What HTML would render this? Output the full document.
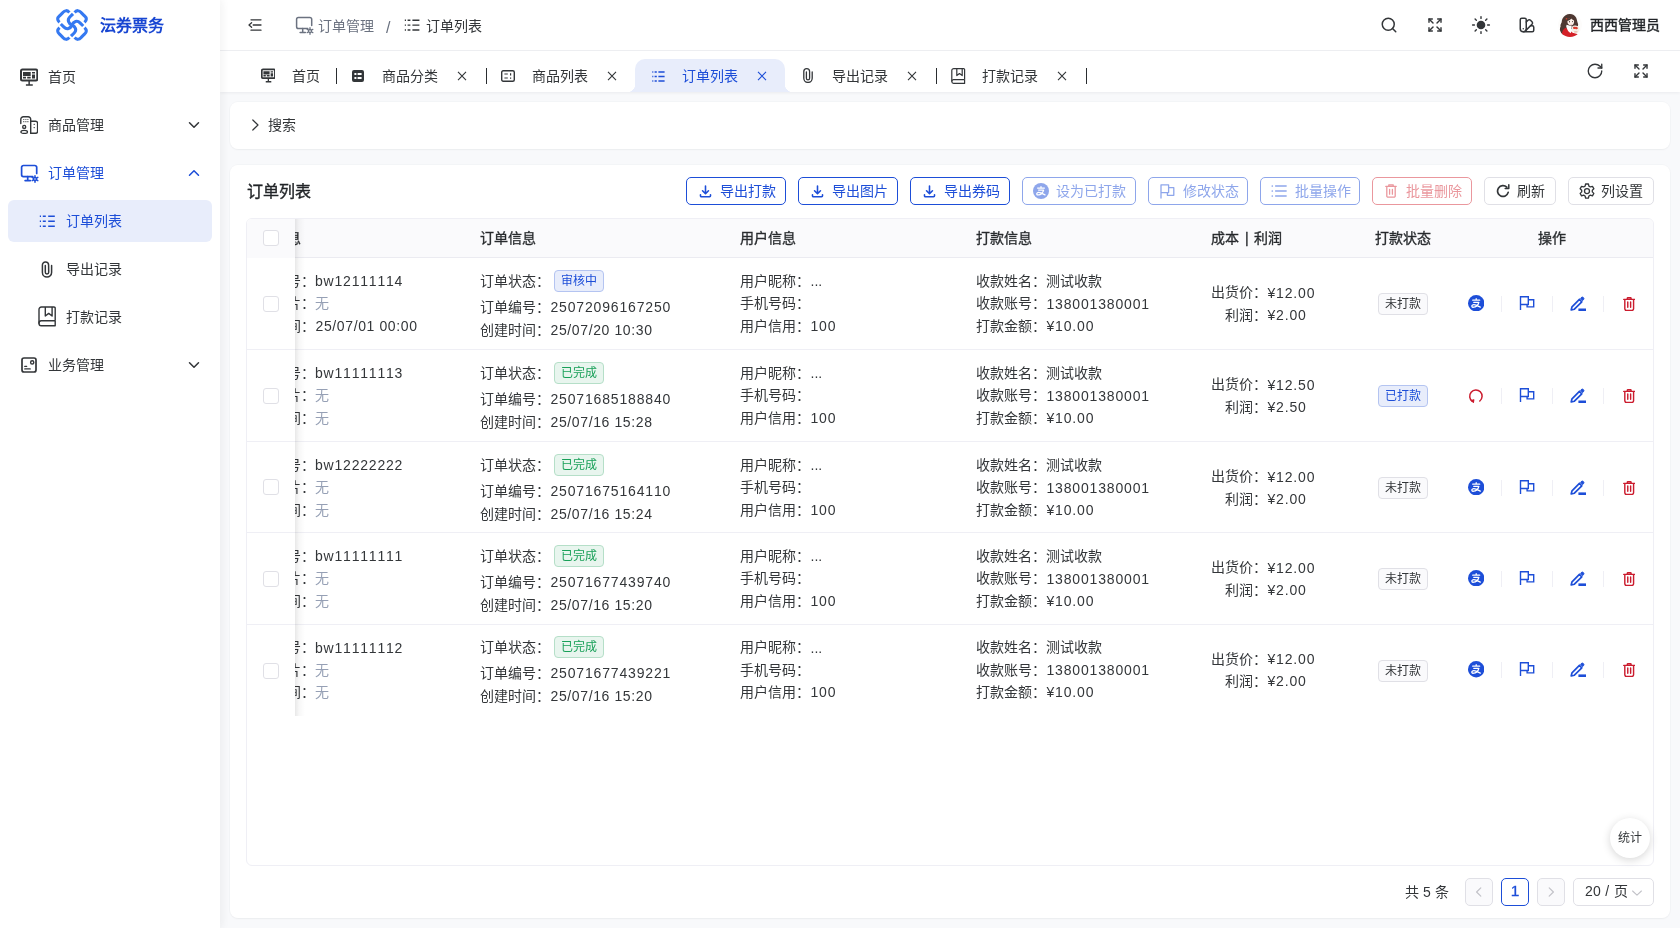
<!DOCTYPE html>
<html lang="zh-CN">
<head>
<meta charset="utf-8">
<title>订单列表</title>
<style>
*{box-sizing:border-box;margin:0;padding:0}
html,body{width:1680px;height:928px;overflow:hidden}
body{font-family:"Liberation Sans",sans-serif;font-size:14px;color:#333639;background:#f8f9fb;position:relative;line-height:22px}
.n{letter-spacing:.83px;position:relative;top:.4px;font-kerning:none}
.c .n{margin-left:.5px}
.c .n.w{margin-left:0}
.n.w{letter-spacing:.8px}
.n.d{letter-spacing:.62px}
svg{display:block}
#side,#head,#tabs,.panel{will-change:transform}
/* ---------- sidebar ---------- */
#side{position:absolute;left:0;top:0;width:220px;height:928px;background:#fff;box-shadow:2px 0 8px rgba(29,35,41,.06);z-index:5}
#logo{position:absolute;left:0;top:0;width:220px;height:50px}
#logo svg{position:absolute;left:56px;top:9px}
#logo b{position:absolute;left:100px;top:15px;font-size:16px;line-height:22px;color:#1846d2;font-weight:700;white-space:nowrap}
.mi{position:absolute;left:8px;width:204px;height:42px;border-radius:6px;color:#333639}
.mi svg.ic{position:absolute;left:12px;top:12px}
.mi span{position:absolute;left:40px;top:10px;line-height:22px;white-space:nowrap}
.mi svg.ar{position:absolute;left:180px;top:15px}
.mi.sub svg.ic{left:30px}
.mi.sub span{left:58px}
.mi.on{color:#1d4ed8}
.mi.sel{background:#e8edfb;color:#1d4ed8}
/* ---------- header ---------- */
#head{position:absolute;left:220px;top:0;width:1460px;height:51px;background:#fff;border-bottom:1px solid #eff0f3}
#head .a{position:absolute}
#head .t{position:absolute;top:14.7px;line-height:22px;white-space:nowrap}
/* ---------- tabs ---------- */
#tabs{position:absolute;left:220px;top:51px;width:1460px;height:41px;background:#fff;box-shadow:0 1px 3px rgba(0,21,41,.06)}
.tb{position:absolute;top:9px;height:32px;width:150px}
.tb svg.ic{position:absolute;left:16px;top:8px}
.tb span{position:absolute;left:46px;top:5px;line-height:22px;white-space:nowrap}
.tb svg.x{position:absolute;left:121px;top:11px}
.tb i{position:absolute;left:0;top:8px;width:1px;height:16px;background:#2a2d30}
.tb.act{color:#1d4ed8}
#actbg{position:absolute;left:415px;top:8.3px;width:150px;height:32.7px;background:#e8edfb;border-radius:10px 10px 0 0}
#actbg:before,#actbg:after{content:"";position:absolute;bottom:0;width:8px;height:8px}
#actbg:before{left:-8px;background:radial-gradient(circle at 0 0,transparent 8px,#e8edfb 8.5px)}
#actbg:after{right:-8px;background:radial-gradient(circle at 100% 0,transparent 8px,#e8edfb 8.5px)}
/* ---------- panels ---------- */
.panel{position:absolute;left:230px;width:1440px;background:#fff;border-radius:8px;box-shadow:0 0 0 1px rgba(20,30,60,.018),0 1px 2px rgba(20,30,60,.04)}
/* ---------- buttons ---------- */
.btn{position:absolute;top:12px;height:28px;border:1px solid #e0e0e6;border-radius:5px;font-size:14px;line-height:26px;white-space:nowrap;background:#fff;color:#333639}
.btn svg{position:absolute;left:11px;top:5px}
.btn span{position:absolute;left:33px;top:0}
.btn.p{border-color:#1d4ed8;color:#1d4ed8}
.btn.pd{border-color:#8ea6eb;color:#8ea6eb}
.btn.ed{border-color:#ea979d;color:#ea979d}
/* ---------- table ---------- */
#tbl{position:absolute;left:16px;top:53px;width:1408px;height:648px;border:1px solid #efeff5;border-radius:6px;overflow:hidden}
#th{position:absolute;left:0;top:0;width:100%;height:39px;background:#fafafc;border-bottom:1px solid #ebebf1;font-weight:400;-webkit-text-stroke:.35px #333639;color:#1f2225}
#th span{position:absolute;top:8px;line-height:22px;white-space:nowrap}
.tr{position:absolute;left:0;width:100%;height:92px;border-bottom:1px solid #efeff5;background:#fff}
.c{position:absolute;white-space:nowrap;line-height:22.4px}
.c div{height:22.4px}
.cb{position:absolute;left:16px;width:16px;height:16px;border:1px solid #e0e0e6;border-radius:3px;background:#fff}
.g{color:#96a0b5}
.tag{display:inline-block;height:22px;line-height:20px;font-size:12px;padding:0 6px;border-radius:4px;border:1px solid #e0e0e6;background:#fafafc;color:#333639;vertical-align:top}
.tag.b{color:#1d4ed8;background:#e8edfb;border-color:#b4c4f1}
.tag.gr{color:#18a058;background:#e8f5ee;border-color:#b5dfc8}
.ops{position:absolute;left:1210px;top:37.5px;width:190px;height:22px}
.ops svg{position:absolute;top:2px}
.ops i{position:absolute;top:0;width:1px;height:16px;background:#efeff5}
#fix{position:absolute;left:0;top:0;width:48px;height:497px;background:#fff;z-index:2}
.last>*{margin-top:-.7px}
.ln{position:absolute;left:0;width:48px;height:1px;background:#efeff5}
#sh{position:absolute;left:48px;top:0;width:10px;height:497px;background:linear-gradient(90deg,rgba(0,0,0,.09),rgba(0,0,0,.03) 40%,rgba(0,0,0,0))}
.pg{position:absolute;top:713px;width:28px;height:28px;border:1px solid #e0e0e6;border-radius:5px;line-height:24.6px;text-align:center;background:#fff;white-space:nowrap}
.pg svg{margin:7px auto 0}
</style>
</head>
<body>
<div id="side">
<div id="logo">
<svg width="32" height="32" viewBox="0 0 32 32" fill="none" stroke="#3579f1" stroke-width="3.1" stroke-linecap="butt" stroke-linejoin="round">
<path d="M13.4 3.5Q10-.2 6.8 3.6L3.6 6.8Q-.2 10 3.5 13.4"/>
<path d="M18.6 3.5Q22-.2 25.2 3.6L28.4 6.8Q32.2 10 28.5 13.4"/>
<path d="M13.4 28.5Q10 32.2 6.8 28.4L3.6 25.2Q-.2 22 3.5 18.6"/>
<path d="M18.6 28.5Q22 32.2 25.2 28.4L28.4 25.2Q32.2 22 28.5 18.6"/>
<path id="lgS" d="M17 4.8 13.8 8C11 10.8 12.4 14.4 16 16C19.6 17.6 21 21.2 18.2 24L15 27.2"/>
<path d="M17 4.8 13.8 8C11 10.8 12.4 14.4 16 16C19.6 17.6 21 21.2 18.2 24L15 27.2" transform="rotate(-90 16 16)"/>
</svg>
<b>沄券票务</b>
</div>
<div class="mi" style="top:56px">
<svg class="ic" width="18.4" height="18" viewBox="0 0 18.4 18" fill="none" stroke="#333639" style="left:11.9px"><rect x="1" y="1.6" width="16.3" height="11" rx="1.5" stroke-width="2"/><path d="M9.15 12.6v4M5.9 17.1h6.9" stroke-width="1.5"/><path d="M3 4.1h7.7v3.850H3zM12 4.1h3v1.4h-3zM12 6.6h3v3.9h-3zM3 8.8h3v1.7H3zM7.2 8.8h3.5v1.7H7.2z" fill="#333639" stroke="none"/></svg>
<span>首页</span></div>
<div class="mi" style="top:104px">
<svg class="ic" width="18" height="18" viewBox="0 0 18 18" fill="none" stroke="#333639" stroke-width="1.4" stroke-linecap="round" stroke-linejoin="round"><path d="M.8 7.6V3.4A2.6 2.6 0 0 1 3.4.8h4.7a2.6 2.6 0 0 1 2.6 2.6V17.3"/><path d="M10.7 5.2h4.7a2.2 2.2 0 0 1 2.2 2.2v7.9a2 2 0 0 1-2 2H10.7"/><circle cx="4.2" cy="10.9" r="1.5"/><ellipse cx="4.2" cy="15.9" rx="3.3" ry="1.55" stroke-width="1.3"/><path d="M3.8 3.5h.01M5.9 3.5h.01M7.9 3.5h.01M3.8 5.7h.01M5.9 5.7h.01M7.9 5.7h.01M14.1 8.3h.2M14.1 11.6h.2" stroke-width="1.2"/></svg>
<span>商品管理</span>
<svg class="ar" width="12" height="12" viewBox="0 0 12 12" fill="none" stroke="#333639" stroke-width="1.5" stroke-linecap="round" stroke-linejoin="round"><path d="M1.5 3.7 6 8.3 10.5 3.7"/></svg></div>
<div class="mi on" style="top:152px">
<svg class="ic" width="19" height="19" viewBox="0 0 19 19" fill="none" stroke="#1d4ed8" stroke-width="1.7" stroke-linecap="round" stroke-linejoin="round"><path d="M16.7 9.5V3.3A1.8 1.8 0 0 0 14.9 1.5H3.4A1.8 1.8 0 0 0 1.6 3.3v7.450a1.8 1.8 0 0 0 1.8 1.8h9.4"/><path d="M7.7 12.6v4M5.1 16.6h5.2"/><circle cx="15" cy="15" r="1.5" stroke-width="1.5"/><path d="M15.00 13.10L15.00 11.75M15.00 16.90L15.00 18.25M16.65 15.95L17.81 16.62M16.65 14.05L17.81 13.38M13.35 15.95L12.19 16.62M13.35 14.05L12.19 13.38" stroke-width="1.5"/></svg>
<span>订单管理</span>
<svg class="ar" width="12" height="12" viewBox="0 0 12 12" fill="none" stroke="#1d4ed8" stroke-width="1.5" stroke-linecap="round" stroke-linejoin="round"><path d="M1.5 8.3 6 3.7 10.5 8.3"/></svg></div>
<div class="mi sub sel" style="top:200px">
<svg class="ic" width="18" height="18" viewBox="0 0 18 18" fill="none" stroke="#1d4ed8" stroke-width="1.5"><path d="M1.8 4.2h1.2M4.8 4.2h3M10.2 4.2h6.6M1.8 9.2h1.2M4.8 9.2h3M10.2 9.2h6.6M1.8 14.2h1.2M4.8 14.2h3M10.2 14.2h6.6"/></svg>
<span>订单列表</span></div>
<div class="mi sub" style="top:248px">
<svg class="ic" width="18" height="18" viewBox="0 0 18 18" fill="none" stroke="#333639" stroke-width="1.5" stroke-linecap="round"><path d="M13.6 5.5v7a4.6 4.6 0 0 1-9.2 0V5.2a3.1 3.1 0 0 1 6.2-.3l.1 7.4a1.7 1.7 0 0 1-3.4 0V5.4" /></svg>
<span>导出记录</span></div>
<div class="mi sub" style="top:296px">
<svg class="ic" width="19" height="21" viewBox="0 0 19 21" fill="none" stroke="#333639" stroke-width="1.4" stroke-linejoin="round" style="top:10px"><path d="M17.2 14.8V2.2A1.2 1.2 0 0 0 16 1H3.4A2.4 2.4 0 0 0 1 3.4v14.4"/><path d="M17.2 14.8H3.2A2.2 2.2 0 0 0 1 17v.6a2.2 2.2 0 0 0 2.2 2.2h14v-5"/><path d="M7.3 1v9l3.4-2.6L14.1 10V1"/></svg>
<span>打款记录</span></div>
<div class="mi" style="top:344px">
<svg class="ic" width="18" height="18" viewBox="0 0 18 18" fill="none" stroke="#333639" stroke-width="1.7" stroke-linejoin="round" stroke-linecap="round"><rect x="2" y="2" width="14" height="14" rx="2"/><circle cx="12.2" cy="6.4" r="1.6" stroke-width="1.4"/><path d="M4.8 10.4h1.8M4.8 12.9h5.4" stroke-width="1.4"/></svg>
<span>业务管理</span>
<svg class="ar" width="12" height="12" viewBox="0 0 12 12" fill="none" stroke="#333639" stroke-width="1.5" stroke-linecap="round" stroke-linejoin="round"><path d="M1.5 3.7 6 8.3 10.5 3.7"/></svg></div>
</div>
<div id="head">
<svg class="a" style="left:28px;top:18px" width="14" height="14" viewBox="0 0 14 14" fill="none" stroke="#333639" stroke-width="1.3" stroke-linecap="round" stroke-linejoin="round"><path d="M3 1.8h10M5.2 7h7.8M3 12.2h10M3.6 4.7 1 7l2.6 2.3"/></svg>
<svg class="a" style="left:75px;top:16px" width="19" height="19" viewBox="0 0 19 19" fill="none" stroke="#6b7280" stroke-width="1.5" stroke-linecap="round" stroke-linejoin="round"><path d="M16.7 9.5V3.3A1.8 1.8 0 0 0 14.9 1.5H3.4A1.8 1.8 0 0 0 1.6 3.3v7.450a1.8 1.8 0 0 0 1.8 1.8h9.4"/><path d="M7.7 12.6v4M5.1 16.6h5.2"/><circle cx="15" cy="15" r="1.5" stroke-width="1.3"/><path d="M15.00 13.10L15.00 11.75M15.00 16.90L15.00 18.25M16.65 15.95L17.81 16.62M16.65 14.05L17.81 13.38M13.35 15.95L12.19 16.62M13.35 14.05L12.19 13.38" stroke-width="1.3"/></svg>
<span class="t" style="left:98px;color:#6b7280">订单管理</span>
<span class="t" style="left:166px;color:#6b7280;font-size:16px;top:17px">/</span>
<svg class="a" style="left:184px;top:17px" width="16" height="16" viewBox="0 0 16 16" fill="none" stroke="#333639" stroke-width="1.4"><path d="M.8 3.2h1.2M3.6 3.2h2.8M8.4 3.2h7M.8 8.1h1.2M3.6 8.1h2.8M8.4 8.1h7M.8 13h1.2M3.6 13h2.8M8.4 13h7"/></svg>
<span class="t" style="left:206px">订单列表</span>
<svg class="a" style="left:1159.7px;top:16.3px" width="18" height="18" viewBox="0 0 24 24" fill="none" stroke="#333639" stroke-width="2" stroke-linecap="round" stroke-linejoin="round"><circle cx="11" cy="11" r="8"/><path d="m21 21-4.3-4.3"/></svg>
<svg class="a" style="left:1207px;top:17.3px" width="16" height="16" viewBox="0 0 24 24" fill="none" stroke="#333639" stroke-width="2.1" stroke-linecap="round" stroke-linejoin="round"><path d="m15 15 6 6"/><path d="m15 9 6-6"/><path d="M21 16v5h-5"/><path d="M21 8V3h-5"/><path d="M3 16v5h5"/><path d="m3 21 6-6"/><path d="M3 8V3h5"/><path d="M9 9 3 3"/></svg>
<svg class="a" style="left:1251px;top:15px" width="20" height="20" viewBox="0 0 20 20" fill="none" stroke="#333639" stroke-width="1.4" stroke-linecap="round"><circle cx="10" cy="10" r="4.3" fill="#333639" stroke="none"/><path d="M10 1.6v1.8M10 16.6v1.8M1.6 10h1.8M16.6 10h1.8M4.1 4.1l1.250 1.250M14.650 14.650l1.250 1.250M4.1 15.9l1.250-1.250M14.650 5.350l1.250-1.250"/></svg>
<svg class="a" style="left:1297.6px;top:16.2px" width="18" height="18" viewBox="0 0 24 24" fill="none" stroke="#333639" stroke-width="2" stroke-linecap="round" stroke-linejoin="round"><path d="M11 17a4 4 0 0 1-8 0V5a2 2 0 0 1 2-2h4a2 2 0 0 1 2 2Z"/><path d="M16.7 13H19a2 2 0 0 1 2 2v4a2 2 0 0 1-2 2H7"/><path d="M7 17h.01"/><path d="m11 8 2.3-2.3a2.4 2.4 0 0 1 3.404.004L18.6 7.6a2.4 2.4 0 0 1 .026 3.434L9.9 19.8"/></svg>
<svg class="a" style="left:1337.5px;top:13px" width="24" height="24" viewBox="0 0 24 24"><defs><clipPath id="av"><circle cx="12" cy="12" r="11.9"/></clipPath></defs><circle cx="12" cy="12" r="11.9" fill="#fdfcfb"/><g clip-path="url(#av)">
<path d="M11.6 1c2.8-.2 5.4 1.3 6.6 3.800.9 1.900.8 3.6 1.6 5.400.7 1.500.2 3-.6 4.2l-5 1.6-6 .6c-.6 2-1.4 4-3 5.4-1.5-.8-2.6-2.2-2.8-3.8-.9-1.5-.4-3.200.2-4.6-.4-1.600.2-3 1-4.2C3.8 6 5.4 3.4 7.6 2.2 8.8 1.5 10.2 1.1 11.6 1z" fill="#4e3832"/>
<path d="M9.4 8.8c0-2.3 1.7-3.9 3.6-3.8 1.900.1 3.2 1.7 3.1 3.7-.1 2.1-1.5 3.7-3.3 3.7-1.9 0-3.4-1.5-3.4-3.6z" fill="#fdf1ea"/>
<path d="M8.7 8.2c.9-2.6 3-3.9 5.2-3.5 1.400.3 2.4 1.4 2.8 2.9-1.5-.3-2.6-1-3.4-2-1 1.5-2.6 2.4-4.6 2.6z" fill="#4e3832"/>
<path d="M10.9 8.7a.55.7 0 1 0 1.1 0 .55.7 0 1 0-1.1 0zM14.1 8.6a.5.650 0 1 0 1 0 .5.650 0 1 0-1 0z" fill="#3a2a28"/>
<path d="M12.6 11.3q.6.4 1.2 0" stroke="#d9534f" stroke-width=".35" fill="none"/>
<path d="M3.6 23c.2-4 1.4-7 4-8.2l3.4 1.6 3.6 3.4 5.4 1.4-1 2.8H4z" fill="#d42027"/>
<path d="M8.6 11.8l5.2 1.4-.4 3 -.4 4-2-1.2c-1.4-1.8-2.4-3.8-2.8-5.8z" fill="#fefefe"/>
<path d="M14.2 13.6c1-1 2.6-1.4 4-.8 1.6-.2 3 1 3.2 2.600.2 1.8-.6 3.6-2.2 4.2-1.400.5-3.200.4-4.2-.6-1.2-1.4-1.6-3.8-.8-5.4z" fill="#f7efe6"/>
<path d="M15.2 14.2c.6-.6 1.5-.6 2.1-.1.6-.5 1.6-.4 2.100.2.500.5.5 1.300.1 1.8-.9.3-1.700.1-2.3-.4-.6.4-1.600.4-2.2-.2-.3-.4-.2-1 .2-1.3z" fill="#dc3a2c"/>
<path d="M16.2 18.2h3.2v1.4h-3.2z" fill="#e7b8a8"/>
<path d="M7.7 5.2l1.500.1.2 1-1.500.3z" fill="#e8452c"/>
</g></svg>
<span class="t" style="left:1370px;top:13.8px;-webkit-text-stroke:.4px #26292c;color:#1f2225">西西管理员</span>
</div>
<div id="tabs">
<div id="actbg"></div>
<div class="tb" style="left:0px;width:116px"><svg class="ic" style="left:40.7px;top:8.4px" width="14.8" height="14.5" viewBox="0 0 18.4 18" fill="none" stroke="#333639"><rect x="1" y="1.6" width="16.3" height="11" rx="1.5" stroke-width="2.1"/><path d="M9.15 12.6v4M5.9 17.1h6.9" stroke-width="1.6"/><path d="M3 4.1h7.7v3.850H3zM12 4.1h3v1.4h-3zM12 6.6h3v3.9h-3zM3 8.8h3v1.7H3zM7.2 8.8h3.5v1.7H7.2z" fill="#333639" stroke="none"/></svg><span style="left:72px">首页</span></div>
<div class="tb" style="left:116px"><i></i><svg class="ic" style="top:10px" width="12" height="12" viewBox="0 0 12 12"><path fill-rule="evenodd" d="M2 0h8a2 2 0 0 1 2 2v8a2 2 0 0 1-2 2H2a2 2 0 0 1-2-2V2a2 2 0 0 1 2-2zM2.4 3v2h2V3zM5.6 3v2h4V3zM2.4 7v2h2V7zM5.6 7v2h4V7z" fill="#333639"/></svg><span>商品分类</span><svg class="x" width="10" height="10" viewBox="0 0 10 10" fill="none" stroke="#333639" stroke-width="1.1"><path d="M1 .8 9 9.2M9 .8 1 9.2"/></svg></div>
<div class="tb" style="left:266px"><i></i><svg class="ic" style="top:10px;left:15px" width="14" height="12" viewBox="0 0 14 12" fill="none" stroke="#333639" stroke-width="1.4"><rect x=".7" y=".7" width="12.6" height="10.6" rx="1.5"/><path d="M3.4 4h3.4M3.4 8h3.4M9.6 3.2v2.2M9.6 7.4v1.4" stroke-width="1.2"/></svg><span>商品列表</span><svg class="x" width="10" height="10" viewBox="0 0 10 10" fill="none" stroke="#333639" stroke-width="1.1"><path d="M1 .8 9 9.2M9 .8 1 9.2"/></svg></div>
<div class="tb act" style="left:416px"><svg class="ic" style="top:11px" width="13" height="11" viewBox="0 0 13 11" fill="none" stroke="#1d4ed8" stroke-width="1.45"><path d="M.3 1h1M2.6 1h2.2M6.4 1h6.2M.3 5.5h1M2.6 5.5h2.2M6.4 5.5h6.2M.3 10h1M2.6 10h2.2M6.4 10h6.2"/></svg><span>订单列表</span><svg class="x" width="10" height="10" viewBox="0 0 10 10" fill="none" stroke="#1d4ed8" stroke-width="1.1"><path d="M1 .8 9 9.2M9 .8 1 9.2"/></svg></div>
<div class="tb" style="left:566px"><svg class="ic" style="left:17px;top:8px" width="10" height="15" viewBox="0 0 10 15" fill="none" stroke="#333639" stroke-width="1.3" stroke-linecap="round"><path d="M9.2 4v6.2a4.2 4.2 0 0 1-8.4 0V3.6a2.9 2.9 0 0 1 5.8 0v6.6a1.6 1.6 0 0 1-3.2 0V4"/></svg><span>导出记录</span><svg class="x" width="10" height="10" viewBox="0 0 10 10" fill="none" stroke="#333639" stroke-width="1.1"><path d="M1 .8 9 9.2M9 .8 1 9.2"/></svg></div>
<div class="tb" style="left:716px"><i></i><svg class="ic" style="left:15px;top:8px" width="15" height="16" viewBox="0 0 15 16" fill="none" stroke="#333639" stroke-width="1.2" stroke-linejoin="round"><path d="M13.6 11.6V1.6A1 1 0 0 0 12.6.6H2.8A2 2 0 0 0 .8 2.6v11"/><path d="M13.6 11.6H2.6A1.8 1.8 0 0 0 .8 13.4v.2a1.8 1.8 0 0 0 1.8 1.8h11v-3.8"/><path d="M5.8.6v7l2.7-2 2.7 2v-7"/></svg><span>打款记录</span><svg class="x" width="10" height="10" viewBox="0 0 10 10" fill="none" stroke="#333639" stroke-width="1.1"><path d="M1 .8 9 9.2M9 .8 1 9.2"/></svg></div>
<div class="tb" style="left:866px;width:2px"><i></i></div>
<svg style="position:absolute;left:1365.8px;top:11.2px" width="18" height="18" viewBox="0 0 24 24" fill="none" stroke="#333639" stroke-width="1.8" stroke-linecap="round" stroke-linejoin="round"><path d="M21 12a9 9 0 1 1-9-9c2.520 0 4.930 1 6.740 2.740L21 8"/><path d="M21 3v5h-5"/></svg>
<svg style="position:absolute;left:1413px;top:12.2px" width="16" height="16" viewBox="0 0 24 24" fill="none" stroke="#333639" stroke-width="2.1" stroke-linecap="round" stroke-linejoin="round"><path d="m15 15 6 6"/><path d="m15 9 6-6"/><path d="M21 16v5h-5"/><path d="M21 8V3h-5"/><path d="M3 16v5h5"/><path d="m3 21 6-6"/><path d="M3 8V3h5"/><path d="M9 9 3 3"/></svg>
</div>
<div class="panel" id="search" style="top:102px;height:47px"><svg style="position:absolute;left:19px;top:17px" width="12" height="12" viewBox="0 0 12 12" fill="none" stroke="#333639" stroke-width="1.2" stroke-linecap="round" stroke-linejoin="round"><path d="M3.8 1 9 6 3.8 11"/></svg><span style="position:absolute;left:38px;top:12px;line-height:22px">搜索</span></div>
<div class="panel" id="card" style="top:165px;height:753px">
<b style="position:absolute;left:17px;top:14.5px;font-size:16px;line-height:24px;font-weight:400;-webkit-text-stroke:.4px #26292c;color:#1f2225">订单列表</b>
<div class="btn p" style="left:456px;width:100px"><svg width="13" height="13" viewBox="0 0 14 14" fill="none" stroke="currentColor" stroke-width="1.7" stroke-linecap="round" stroke-linejoin="round" style="top:6.5px;left:12px"><path d="M7 1.2v8M3.8 6.2 7 9.4l3.2-3.2M1.6 10.6v1a1 1 0 0 0 1 1h8.8a1 1 0 0 0 1-1v-1"/></svg><span>导出打款</span></div>
<div class="btn p" style="left:568px;width:100px"><svg width="13" height="13" viewBox="0 0 14 14" fill="none" stroke="currentColor" stroke-width="1.7" stroke-linecap="round" stroke-linejoin="round" style="top:6.5px;left:12px"><path d="M7 1.2v8M3.8 6.2 7 9.4l3.2-3.2M1.6 10.6v1a1 1 0 0 0 1 1h8.8a1 1 0 0 0 1-1v-1"/></svg><span>导出图片</span></div>
<div class="btn p" style="left:680px;width:100px"><svg width="13" height="13" viewBox="0 0 14 14" fill="none" stroke="currentColor" stroke-width="1.7" stroke-linecap="round" stroke-linejoin="round" style="top:6.5px;left:12px"><path d="M7 1.2v8M3.8 6.2 7 9.4l3.2-3.2M1.6 10.6v1a1 1 0 0 0 1 1h8.8a1 1 0 0 0 1-1v-1"/></svg><span>导出券码</span></div>
<div class="btn pd" style="left:792px;width:114px"><svg width="16" height="16" viewBox="0 0 16 16" style="left:10px"><circle cx="8" cy="8" r="8" fill="currentColor"/><g fill="none" stroke="#fff" stroke-width="1.250" stroke-linecap="round" stroke-linejoin="round"><path d="M4.6 5.1h6.8M8 3.6v1.5M5.6 7.1h5c-.3 1.5-1.1 2.7-2.2 3.6"/><path d="M8.4 10.7c-1.6 1.3-4.2 1.8-4.6.5-.5-1.6 1.7-2.4 4-1.3l4.2 2"/></g></svg><span>设为已打款</span></div>
<div class="btn pd" style="left:918px;width:100px"><svg width="15" height="15" viewBox="0 0 15 15" fill="none" stroke="currentColor" stroke-width="1.3" stroke-linejoin="round" stroke-linecap="round" style="left:11px;top:6px"><path d="M1 14V.9h7.6v2.8h5.2v7.6H7.4V8.6H1M8.6 3.7v4.9H7.4"/></svg><span style="left:34px">修改状态</span></div>
<div class="btn pd" style="left:1030px;width:100px"><svg width="16" height="14" viewBox="0 0 16 14" fill="none" stroke="currentColor" stroke-width="1.3" stroke-linecap="round" style="left:10px;top:6px"><path d="M1.3 2h.01M1.3 7h.01M1.3 12h.01" stroke-width="1.7"/><path d="M4.6 2h10.6M4.6 7h10.6M4.6 12h10.6"/></svg><span style="left:34px">批量操作</span></div>
<div class="btn ed" style="left:1142px;width:100px"><svg width="12" height="14" viewBox="0 0 12 14" fill="none" stroke="currentColor" stroke-width="1.3" stroke-linejoin="round" stroke-linecap="round" style="left:12px;top:6px"><path d="M.8 2.4h10.4M3.8 2.2V.8h4.4v1.4M1.8 2.6v9.4a1.2 1.2 0 0 0 1.2 1.2h6a1.2 1.2 0 0 0 1.2-1.2V2.6M4.6 5.4v4.8M7.4 5.4v4.8"/></svg><span style="left:33px">批量删除</span></div>
<div class="btn" style="left:1254px;width:72px"><svg width="14" height="14" viewBox="0 0 14 14" fill="none" stroke="#333639" stroke-width="1.7" stroke-linecap="round" stroke-linejoin="round" style="left:11px;top:6px"><path d="M12.2 8.4A5.4 5.4 0 1 1 10.8 3.2"/><path d="M12.8.8v3.6H9.2" stroke-width="1.5"/></svg><span style="left:32px">刷新</span></div>
<div class="btn" style="left:1338px;width:86px"><svg width="16" height="17" viewBox="0 0 16 17" fill="none" stroke="#333639" stroke-width="1.3" stroke-linejoin="round" style="left:10px;top:5px"><path d="M6.6 1h2.8l.5 2.1 1.5.85 2.050-.65 1.4 2.4-1.550 1.5v1.7l1.550 1.5-1.4 2.4-2.050-.65-1.5.85-.5 2.1H6.6l-.5-2.1-1.5-.85-2.050.65-1.4-2.4 1.550-1.5V7.2L1.150 5.7l1.4-2.4 2.050.65 1.5-.85z"/><circle cx="8" cy="8.050" r="2.5"/></svg><span style="left:32px">列设置</span></div>
<div id="tbl">
<div id="th"><span style="left:-2px">商品信息</span><span style="left:233px">订单信息</span><span style="left:493px">用户信息</span><span style="left:729px">打款信息</span><span style="left:964px;word-spacing:2px">成本 | 利润</span><span style="left:1128px">打款状态</span><span style="left:1291px">操作</span></div>
<div class="tr" style="top:39px;height:92px"><div class="cb" style="top:37.5px"></div><div class="c" style="left:-2px;top:12px"><div>商品券号：<span class="n w">bw12111114</span></div><div>商品图片：<span class="g">无</span></div><div>过期时间：<span class="n d">25/07/01 00:00</span></div></div><div class="c" style="left:233px;top:12px"><div style="height:25.7px">订单状态：<span class="tag b" style="margin-left:4px">审核中</span></div><div style="height:22.9px">订单编号：<span class="n">25072096167250</span></div><div>创建时间：<span class="n d">25/07/20 10:30</span></div></div><div class="c" style="left:493px;top:12px"><div>用户昵称：<span class="n" style="letter-spacing:0">...</span></div><div>手机号码：</div><div>用户信用：<span class="n">100</span></div></div><div class="c" style="left:729px;top:12px"><div>收款姓名：测试收款</div><div>收款账号：<span class="n">138001380001</span></div><div>打款金额：<span class="n">¥10.00</span></div></div><div class="c" style="left:964px;top:23.2px"><div>出货价：<span class="n">¥12.00</span></div><div style="padding-left:14px">利润：<span class="n">¥2.00</span></div></div><span class="tag" style="position:absolute;left:1131px;top:35.2px">未打款</span><div class="ops"><svg style="left:10.8px;top:-.7px" width="16.4" height="16.4" viewBox="0 0 16 16"><circle cx="8" cy="8" r="8" fill="#1d4ed8"/><g fill="none" stroke="#fff" stroke-width="1.250" stroke-linecap="round" stroke-linejoin="round"><path d="M4.6 5.1h6.8M8 3.6v1.5M5.6 7.1h5c-.3 1.5-1.1 2.7-2.2 3.6"/><path d="M8.4 10.7c-1.6 1.3-4.2 1.8-4.6.5-.5-1.6 1.7-2.4 4-1.3l4.2 2"/></g></svg><i style="left:44px"></i><svg style="left:62px;top:-.6px" width="16" height="16" viewBox="0 0 16 16" fill="none" stroke="#1d4ed8" stroke-width="1.4" stroke-linejoin="miter"><path d="M1.5 15V1.7h7.8v3h5.4v7.2H8.1V9.5H1.5M9.3 4.7v4.8H8.1"/></svg><i style="left:95px"></i><svg style="left:113.4px;top:0" width="16" height="16" viewBox="0 0 16 16" fill="none" stroke="#1d4ed8" stroke-width="1.7" stroke-linejoin="round" stroke-linecap="round"><path d="M9.4 3.4 2 10.8 1.2 14l3.2-.8 7.4-7.4z"/><path d="M10.6 2.2l.6-.6a1.5 1.5 0 0 1 2.2 2.2l-.6.6z" fill="#1d4ed8" stroke-width="1"/><path d="M8.4 13.7h7.6" stroke-width="2.6" stroke-linecap="butt"/></svg><i style="left:146px"></i><svg style="left:165.8px;top:1px" width="12.4" height="14.3" viewBox="0 0 13 15" fill="none" stroke="#cb1c2e" stroke-width="1.5" stroke-linejoin="round" stroke-linecap="round"><path d="M.8 2.5h11.4M4.5 2.3V1.5a.7.7 0 0 1 .7-.7h2.6a.7.7 0 0 1 .7.7V2.3M1.9 2.9v9.5a1.6 1.6 0 0 0 1.6 1.6h6a1.6 1.6 0 0 0 1.6-1.6V2.9M5 5.3v5.4M8 5.3v5.4"/></svg></div></div>
<div class="tr" style="top:131px;height:92px"><div class="cb" style="top:37.5px"></div><div class="c" style="left:-2px;top:12px"><div>商品券号：<span class="n w">bw11111113</span></div><div>商品图片：<span class="g">无</span></div><div>过期时间：<span class="g">无</span></div></div><div class="c" style="left:233px;top:12px"><div style="height:25.7px">订单状态：<span class="tag gr" style="margin-left:4px">已完成</span></div><div style="height:22.9px">订单编号：<span class="n">25071685188840</span></div><div>创建时间：<span class="n d">25/07/16 15:28</span></div></div><div class="c" style="left:493px;top:12px"><div>用户昵称：<span class="n" style="letter-spacing:0">...</span></div><div>手机号码：</div><div>用户信用：<span class="n">100</span></div></div><div class="c" style="left:729px;top:12px"><div>收款姓名：测试收款</div><div>收款账号：<span class="n">138001380001</span></div><div>打款金额：<span class="n">¥10.00</span></div></div><div class="c" style="left:964px;top:23.2px"><div>出货价：<span class="n">¥12.50</span></div><div style="padding-left:14px">利润：<span class="n">¥2.50</span></div></div><span class="tag b" style="position:absolute;left:1131px;top:35.2px">已打款</span><div class="ops"><svg style="left:11.4px;top:.5px" width="16" height="16" viewBox="0 0 16 16" fill="none" stroke="#cb1c2e" stroke-width="1.5" stroke-linecap="round" stroke-linejoin="round"><path d="M11.8 13A6.2 6.2 0 1 0 4.4 13.3"/><path d="M3.2 12.6l2.2 1.800.4-2.6z" fill="#cb1c2e" stroke-width="1.2"/></svg><i style="left:44px"></i><svg style="left:62px;top:-.6px" width="16" height="16" viewBox="0 0 16 16" fill="none" stroke="#1d4ed8" stroke-width="1.4" stroke-linejoin="miter"><path d="M1.5 15V1.7h7.8v3h5.4v7.2H8.1V9.5H1.5M9.3 4.7v4.8H8.1"/></svg><i style="left:95px"></i><svg style="left:113.4px;top:0" width="16" height="16" viewBox="0 0 16 16" fill="none" stroke="#1d4ed8" stroke-width="1.7" stroke-linejoin="round" stroke-linecap="round"><path d="M9.4 3.4 2 10.8 1.2 14l3.2-.8 7.4-7.4z"/><path d="M10.6 2.2l.6-.6a1.5 1.5 0 0 1 2.2 2.2l-.6.6z" fill="#1d4ed8" stroke-width="1"/><path d="M8.4 13.7h7.6" stroke-width="2.6" stroke-linecap="butt"/></svg><i style="left:146px"></i><svg style="left:165.8px;top:1px" width="12.4" height="14.3" viewBox="0 0 13 15" fill="none" stroke="#cb1c2e" stroke-width="1.5" stroke-linejoin="round" stroke-linecap="round"><path d="M.8 2.5h11.4M4.5 2.3V1.5a.7.7 0 0 1 .7-.7h2.6a.7.7 0 0 1 .7.7V2.3M1.9 2.9v9.5a1.6 1.6 0 0 0 1.6 1.6h6a1.6 1.6 0 0 0 1.6-1.6V2.9M5 5.3v5.4M8 5.3v5.4"/></svg></div></div>
<div class="tr" style="top:223px;height:91px"><div class="cb" style="top:37.5px"></div><div class="c" style="left:-2px;top:12px"><div>商品券号：<span class="n w">bw12222222</span></div><div>商品图片：<span class="g">无</span></div><div>过期时间：<span class="g">无</span></div></div><div class="c" style="left:233px;top:12px"><div style="height:25.7px">订单状态：<span class="tag gr" style="margin-left:4px">已完成</span></div><div style="height:22.9px">订单编号：<span class="n">25071675164110</span></div><div>创建时间：<span class="n d">25/07/16 15:24</span></div></div><div class="c" style="left:493px;top:12px"><div>用户昵称：<span class="n" style="letter-spacing:0">...</span></div><div>手机号码：</div><div>用户信用：<span class="n">100</span></div></div><div class="c" style="left:729px;top:12px"><div>收款姓名：测试收款</div><div>收款账号：<span class="n">138001380001</span></div><div>打款金额：<span class="n">¥10.00</span></div></div><div class="c" style="left:964px;top:23.2px"><div>出货价：<span class="n">¥12.00</span></div><div style="padding-left:14px">利润：<span class="n">¥2.00</span></div></div><span class="tag" style="position:absolute;left:1131px;top:35.2px">未打款</span><div class="ops"><svg style="left:10.8px;top:-.7px" width="16.4" height="16.4" viewBox="0 0 16 16"><circle cx="8" cy="8" r="8" fill="#1d4ed8"/><g fill="none" stroke="#fff" stroke-width="1.250" stroke-linecap="round" stroke-linejoin="round"><path d="M4.6 5.1h6.8M8 3.6v1.5M5.6 7.1h5c-.3 1.5-1.1 2.7-2.2 3.6"/><path d="M8.4 10.7c-1.6 1.3-4.2 1.8-4.6.5-.5-1.6 1.7-2.4 4-1.3l4.2 2"/></g></svg><i style="left:44px"></i><svg style="left:62px;top:-.6px" width="16" height="16" viewBox="0 0 16 16" fill="none" stroke="#1d4ed8" stroke-width="1.4" stroke-linejoin="miter"><path d="M1.5 15V1.7h7.8v3h5.4v7.2H8.1V9.5H1.5M9.3 4.7v4.8H8.1"/></svg><i style="left:95px"></i><svg style="left:113.4px;top:0" width="16" height="16" viewBox="0 0 16 16" fill="none" stroke="#1d4ed8" stroke-width="1.7" stroke-linejoin="round" stroke-linecap="round"><path d="M9.4 3.4 2 10.8 1.2 14l3.2-.8 7.4-7.4z"/><path d="M10.6 2.2l.6-.6a1.5 1.5 0 0 1 2.2 2.2l-.6.6z" fill="#1d4ed8" stroke-width="1"/><path d="M8.4 13.7h7.6" stroke-width="2.6" stroke-linecap="butt"/></svg><i style="left:146px"></i><svg style="left:165.8px;top:1px" width="12.4" height="14.3" viewBox="0 0 13 15" fill="none" stroke="#cb1c2e" stroke-width="1.5" stroke-linejoin="round" stroke-linecap="round"><path d="M.8 2.5h11.4M4.5 2.3V1.5a.7.7 0 0 1 .7-.7h2.6a.7.7 0 0 1 .7.7V2.3M1.9 2.9v9.5a1.6 1.6 0 0 0 1.6 1.6h6a1.6 1.6 0 0 0 1.6-1.6V2.9M5 5.3v5.4M8 5.3v5.4"/></svg></div></div>
<div class="tr" style="top:314px;height:92px"><div class="cb" style="top:37.5px"></div><div class="c" style="left:-2px;top:12px"><div>商品券号：<span class="n w">bw11111111</span></div><div>商品图片：<span class="g">无</span></div><div>过期时间：<span class="g">无</span></div></div><div class="c" style="left:233px;top:12px"><div style="height:25.7px">订单状态：<span class="tag gr" style="margin-left:4px">已完成</span></div><div style="height:22.9px">订单编号：<span class="n">25071677439740</span></div><div>创建时间：<span class="n d">25/07/16 15:20</span></div></div><div class="c" style="left:493px;top:12px"><div>用户昵称：<span class="n" style="letter-spacing:0">...</span></div><div>手机号码：</div><div>用户信用：<span class="n">100</span></div></div><div class="c" style="left:729px;top:12px"><div>收款姓名：测试收款</div><div>收款账号：<span class="n">138001380001</span></div><div>打款金额：<span class="n">¥10.00</span></div></div><div class="c" style="left:964px;top:23.2px"><div>出货价：<span class="n">¥12.00</span></div><div style="padding-left:14px">利润：<span class="n">¥2.00</span></div></div><span class="tag" style="position:absolute;left:1131px;top:35.2px">未打款</span><div class="ops"><svg style="left:10.8px;top:-.7px" width="16.4" height="16.4" viewBox="0 0 16 16"><circle cx="8" cy="8" r="8" fill="#1d4ed8"/><g fill="none" stroke="#fff" stroke-width="1.250" stroke-linecap="round" stroke-linejoin="round"><path d="M4.6 5.1h6.8M8 3.6v1.5M5.6 7.1h5c-.3 1.5-1.1 2.7-2.2 3.6"/><path d="M8.4 10.7c-1.6 1.3-4.2 1.8-4.6.5-.5-1.6 1.7-2.4 4-1.3l4.2 2"/></g></svg><i style="left:44px"></i><svg style="left:62px;top:-.6px" width="16" height="16" viewBox="0 0 16 16" fill="none" stroke="#1d4ed8" stroke-width="1.4" stroke-linejoin="miter"><path d="M1.5 15V1.7h7.8v3h5.4v7.2H8.1V9.5H1.5M9.3 4.7v4.8H8.1"/></svg><i style="left:95px"></i><svg style="left:113.4px;top:0" width="16" height="16" viewBox="0 0 16 16" fill="none" stroke="#1d4ed8" stroke-width="1.7" stroke-linejoin="round" stroke-linecap="round"><path d="M9.4 3.4 2 10.8 1.2 14l3.2-.8 7.4-7.4z"/><path d="M10.6 2.2l.6-.6a1.5 1.5 0 0 1 2.2 2.2l-.6.6z" fill="#1d4ed8" stroke-width="1"/><path d="M8.4 13.7h7.6" stroke-width="2.6" stroke-linecap="butt"/></svg><i style="left:146px"></i><svg style="left:165.8px;top:1px" width="12.4" height="14.3" viewBox="0 0 13 15" fill="none" stroke="#cb1c2e" stroke-width="1.5" stroke-linejoin="round" stroke-linecap="round"><path d="M.8 2.5h11.4M4.5 2.3V1.5a.7.7 0 0 1 .7-.7h2.6a.7.7 0 0 1 .7.7V2.3M1.9 2.9v9.5a1.6 1.6 0 0 0 1.6 1.6h6a1.6 1.6 0 0 0 1.6-1.6V2.9M5 5.3v5.4M8 5.3v5.4"/></svg></div></div>
<div class="tr last" style="top:406px;height:91px;border-bottom:0"><div class="cb" style="top:37.5px"></div><div class="c" style="left:-2px;top:12px"><div>商品券号：<span class="n w">bw11111112</span></div><div>商品图片：<span class="g">无</span></div><div>过期时间：<span class="g">无</span></div></div><div class="c" style="left:233px;top:12px"><div style="height:25.7px">订单状态：<span class="tag gr" style="margin-left:4px">已完成</span></div><div style="height:22.9px">订单编号：<span class="n">25071677439221</span></div><div>创建时间：<span class="n d">25/07/16 15:20</span></div></div><div class="c" style="left:493px;top:12px"><div>用户昵称：<span class="n" style="letter-spacing:0">...</span></div><div>手机号码：</div><div>用户信用：<span class="n">100</span></div></div><div class="c" style="left:729px;top:12px"><div>收款姓名：测试收款</div><div>收款账号：<span class="n">138001380001</span></div><div>打款金额：<span class="n">¥10.00</span></div></div><div class="c" style="left:964px;top:23.2px"><div>出货价：<span class="n">¥12.00</span></div><div style="padding-left:14px">利润：<span class="n">¥2.00</span></div></div><span class="tag" style="position:absolute;left:1131px;top:35.2px">未打款</span><div class="ops"><svg style="left:10.8px;top:-.7px" width="16.4" height="16.4" viewBox="0 0 16 16"><circle cx="8" cy="8" r="8" fill="#1d4ed8"/><g fill="none" stroke="#fff" stroke-width="1.250" stroke-linecap="round" stroke-linejoin="round"><path d="M4.6 5.1h6.8M8 3.6v1.5M5.6 7.1h5c-.3 1.5-1.1 2.7-2.2 3.6"/><path d="M8.4 10.7c-1.6 1.3-4.2 1.8-4.6.5-.5-1.6 1.7-2.4 4-1.3l4.2 2"/></g></svg><i style="left:44px"></i><svg style="left:62px;top:-.6px" width="16" height="16" viewBox="0 0 16 16" fill="none" stroke="#1d4ed8" stroke-width="1.4" stroke-linejoin="miter"><path d="M1.5 15V1.7h7.8v3h5.4v7.2H8.1V9.5H1.5M9.3 4.7v4.8H8.1"/></svg><i style="left:95px"></i><svg style="left:113.4px;top:0" width="16" height="16" viewBox="0 0 16 16" fill="none" stroke="#1d4ed8" stroke-width="1.7" stroke-linejoin="round" stroke-linecap="round"><path d="M9.4 3.4 2 10.8 1.2 14l3.2-.8 7.4-7.4z"/><path d="M10.6 2.2l.6-.6a1.5 1.5 0 0 1 2.2 2.2l-.6.6z" fill="#1d4ed8" stroke-width="1"/><path d="M8.4 13.7h7.6" stroke-width="2.6" stroke-linecap="butt"/></svg><i style="left:146px"></i><svg style="left:165.8px;top:1px" width="12.4" height="14.3" viewBox="0 0 13 15" fill="none" stroke="#cb1c2e" stroke-width="1.5" stroke-linejoin="round" stroke-linecap="round"><path d="M.8 2.5h11.4M4.5 2.3V1.5a.7.7 0 0 1 .7-.7h2.6a.7.7 0 0 1 .7.7V2.3M1.9 2.9v9.5a1.6 1.6 0 0 0 1.6 1.6h6a1.6 1.6 0 0 0 1.6-1.6V2.9M5 5.3v5.4M8 5.3v5.4"/></svg></div></div>
<div id="fix"><div style="position:absolute;left:0;top:0;width:48px;height:39px;background:#fafafc"></div><div class="cb" style="top:11px"></div><div class="cb" style="top:76.8px"></div><div class="cb" style="top:168.8px"></div><div class="cb" style="top:260.3px"></div><div class="cb" style="top:351.8px"></div><div class="cb" style="top:443.8px"></div><div class="ln" style="top:130px"></div><div class="ln" style="top:222px"></div><div class="ln" style="top:313px"></div><div class="ln" style="top:405px"></div><div id="sh"></div></div></div>
<div style="position:absolute;left:1379.5px;top:653px;width:40px;height:40px;border-radius:50%;background:#fff;box-shadow:0 2px 8px rgba(0,0,0,.16);font-size:12px;line-height:40px;text-align:center;z-index:3">统计</div>
<span style="position:absolute;left:1175px;top:715.7px;line-height:22px;white-space:nowrap">共 <span class="n">5</span> 条</span>
<div class="pg" style="left:1235px;background:#fafafc"><svg width="12" height="12" viewBox="0 0 12 12" fill="none" stroke="#c2c2c8" stroke-width="1.2" stroke-linecap="round" stroke-linejoin="round"><path d="M7.8 1.8 3.6 6l4.2 4.2"/></svg></div>
<div class="pg" style="left:1271px;border-color:#1d4ed8;color:#1d4ed8;font-size:15.5px;-webkit-text-stroke:.3px #1d4ed8">1</div>
<div class="pg" style="left:1307px;background:#fafafc"><svg width="12" height="12" viewBox="0 0 12 12" fill="none" stroke="#c2c2c8" stroke-width="1.2" stroke-linecap="round" stroke-linejoin="round"><path d="M4.2 1.8 8.4 6 4.2 10.2"/></svg></div>
<div class="pg" style="left:1343px;width:81px;text-align:left;padding-left:11px"><span class="n" style="letter-spacing:.3px">20 / </span>页<svg width="12" height="12" viewBox="0 0 12 12" fill="none" stroke="#c2c2c8" stroke-width="1.1" stroke-linecap="round" stroke-linejoin="round" style="position:absolute;left:57px;top:8px;margin:0"><path d="M1.6 4 6 8.2 10.4 4"/></svg></div>
</div>
</body>
</html>
